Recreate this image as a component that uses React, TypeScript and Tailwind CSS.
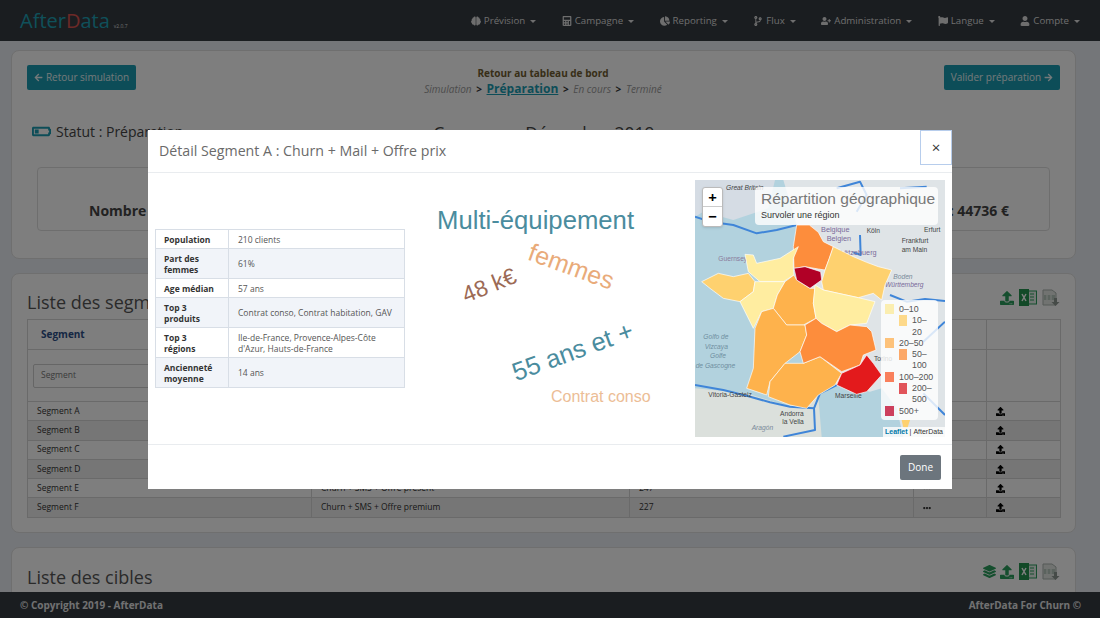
import { FaArrowLeft, FaArrowRight, FaBrain, FaCalculator, FaChartPie, FaCodeBranch, FaUserPlus, FaFlag, FaUser, FaUpload, FaLayerGroup, FaEllipsisH, FaBatteryQuarter } from 'react-icons/fa';

const navItems = [
  { label: 'Prévision', icon: FaBrain },
  { label: 'Campagne', icon: FaCalculator },
  { label: 'Reporting', icon: FaChartPie },
  { label: 'Flux', icon: FaCodeBranch },
  { label: 'Administration', icon: FaUserPlus },
  { label: 'Langue', icon: FaFlag },
  { label: 'Compte', icon: FaUser },
];

const segments = [
  { nom: 'Segment A', detail: 'Churn + Mail + Offre prix', nb: 210 },
  { nom: 'Segment B', detail: 'Churn + Mail + Offre présent', nb: 232 },
  { nom: 'Segment C', detail: 'Churn + Mail + Offre premium', nb: 241 },
  { nom: 'Segment D', detail: 'Churn + SMS + Offre prix', nb: 219 },
  { nom: 'Segment E', detail: 'Churn + SMS + Offre présent', nb: 247 },
  { nom: 'Segment F', detail: 'Churn + SMS + Offre premium', nb: 227 },
];

const details = [
  { label: 'Population', value: '210 clients', rowH: 'h-[19px]' },
  { label: 'Part des femmes', value: '61%', rowH: 'h-[30px]' },
  { label: 'Age médian', value: '57 ans', rowH: 'h-[19px]' },
  { label: 'Top 3 produits', value: 'Contrat conso, Contrat habitation, GAV', rowH: 'h-[30px]' },
  { label: 'Top 3 régions', value: "Ile-de-France, Provence-Alpes-Côte d'Azur, Hauts-de-France", rowH: 'h-[30px]' },
  { label: 'Ancienneté moyenne', value: '14 ans', rowH: 'h-[30px]' },
];

// points are in the coordinates of the svg viewBox of the map
const regions = [
  { fill: '#fd8d3c', points: '320,150 358,150 385,172 400,200 430,215 418,250 405,285 385,282 345,275 312,280 310,215' },
  { fill: '#fed16f', points: '430,215 490,245 530,262 565,275 605,285 585,330 575,375 550,355 505,368 445,355 400,345 395,320 405,285 418,250' },
  { fill: '#ffeda0', points: '165,238 190,240 200,265 270,250 325,215 310,250 310,280 312,300 280,320 210,320 175,290' },
  { fill: '#fed16f', points: '35,320 85,295 130,305 175,295 195,320 190,350 150,380 100,370 60,340' },
  { fill: '#ffeda0', points: '195,320 285,320 262,360 250,400 215,410 190,460 150,380 190,350' },
  { fill: '#feb24c', points: '312,300 320,315 360,340 375,340 370,385 378,430 340,450 290,450 250,400 262,360 285,320' },
  { fill: '#ffeda0', points: '375,330 400,345 445,355 505,368 555,380 530,445 480,450 440,470 395,445 378,430 370,385' },
  { fill: '#feb24c', points: '215,410 250,400 290,450 345,450 350,480 330,530 285,565 240,620 230,660 170,640 190,580 195,460' },
  { fill: '#feb24c', points: '285,565 340,565 390,545 455,595 435,630 385,660 350,700 300,690 235,665 240,620' },
  { fill: '#fd8d3c', points: '345,450 378,430 395,445 440,470 480,450 530,455 545,470 558,525 520,540 510,570 455,590 390,545 340,565 330,530 350,480' },
  { fill: '#e31a1c', points: '455,595 510,570 530,540 550,565 575,600 530,650 500,658 440,630' },
  { fill: '#b10026', points: '312,280 345,275 392,290 395,315 360,340 320,315' },
];

const mapLabels = [
  { x: 108, y: 45, text: 'Great Britain', fill: '#444', size: 20, italic: true },
  { x: 85, y: 257, text: 'Guernsey', fill: '#8a7a9a', size: 20 },
  { x: 393, y: 170, text: 'Belgique', fill: '#7a6a9a', size: 22 },
  { x: 410, y: 198, text: 'Belgien', fill: '#7a6a9a', size: 22 },
  { x: 530, y: 175, text: 'Köln', fill: '#444', size: 20 },
  { x: 702, y: 170, text: 'Erfurt', fill: '#444', size: 20 },
  { x: 635, y: 203, text: 'Frankfurt', fill: '#444', size: 20 },
  { x: 635, y: 230, text: 'am Main', fill: '#444', size: 20 },
  { x: 450, y: 240, text: 'Lëtzebuerg', fill: '#7a6a9a', size: 22 },
  { x: 610, y: 312, text: 'Boden', fill: '#7a8a9a', size: 20, italic: true },
  { x: 585, y: 337, text: 'Württemberg', fill: '#7a6a9a', size: 20, italic: true },
  { x: 40, y: 493, text: 'Golfo de', fill: '#6f8fa0', size: 20, italic: true },
  { x: 44, y: 522, text: 'Vizcaya', fill: '#6f8fa0', size: 20, italic: true },
  { x: 60, y: 550, text: 'Golfe', fill: '#6f8fa0', size: 20, italic: true },
  { x: 17, y: 578, text: 'de Gascogne', fill: '#6f8fa0', size: 20, italic: true },
  { x: 55, y: 667, text: 'Vitoria-Gasteiz', fill: '#444', size: 20 },
  { x: 435, y: 668, text: 'Marseille', fill: '#444', size: 20 },
  { x: 270, y: 722, text: 'Andorra', fill: '#444', size: 20 },
  { x: 277, y: 748, text: 'la Vella', fill: '#444', size: 20 },
  { x: 185, y: 765, text: 'Aragón', fill: '#7a8a9a', size: 20, italic: true },
  { x: 552, y: 558, text: 'Torino', fill: '#444', size: 20 },
];

const mapRoads = [
  'M15,125 L60,140 L130,150 L200,175 L260,165 L320,150',
  'M15,630 L100,645 L170,662 L240,682 L300,695 L372,700 L375,765 L280,785',
  'M440,630 L390,655 L372,700',
  'M510,180 L512,240 L490,232',
  'M600,360 L650,380 L705,372 L765,378',
  'M630,40 L710,35 M820,15 L808,60 L800,90',
  'M440,40 L510,20 L530,60 L500,110',
  'M700,500 L765,440',
  'M700,655 L765,720',
];

const legend = [
  { color: 'bg-[#fbeeb0]', label: '0–10', wrap: false },
  { color: 'bg-[#fdd98a]', label: '10–20', wrap: true },
  { color: 'bg-[#fdc27a]', label: '20–50', wrap: false },
  { color: 'bg-[#fca868]', label: '50–100', wrap: true },
  { color: 'bg-[#f9805c]', label: '100–200', wrap: false },
  { color: 'bg-[#e1545a]', label: '200–500', wrap: true },
  { color: 'bg-[#cc3f5c]', label: '500+', wrap: false },
];

function ExcelIcon() {
  return (
    <svg viewBox="0 0 18 17" className="h-[17px] w-[18px]">
      <rect x="7" y="2" width="10.5" height="13" fill="#e4efe8" stroke="#2a9d5c" />
      <path d="M11 5h4M11 8h4M11 11h4" stroke="#2a9d5c" strokeWidth="1.2" />
      <rect x="0" y="0" width="10" height="17" fill="#25924f" />
      <path d="M3 5l4 7M7 5l-4 7" stroke="#fff" strokeWidth="1.5" />
    </svg>
  );
}

function CsvIcon() {
  return (
    <svg viewBox="0 0 18 17" className="h-[17px] w-[18px]">
      <path d="M1 1h9l4 3v12H1z" fill="#e2e7e3" stroke="#aab3ad" />
      <rect x="2" y="6" width="11" height="5" fill="#b7c6bc" />
      <path d="M5 6v5M9 6v5" stroke="#eef2ef" />
      <path d="M12 9h3v4h2.5l-4 4-4-4H12z" fill="#8d9691" />
    </svg>
  );
}

function ExportIcons({ stack }: { stack?: boolean }) {
  return (
    <div className="flex items-center gap-[5px] text-[#2a9d5c]">
      {stack && <FaLayerGroup className="-mr-[1px] text-[13px]" />}
      <FaUpload className="text-[14px]" />
      <ExcelIcon />
      <CsvIcon />
    </div>
  );
}

function MapPanel() {
  return (
    <div className="relative h-[257px] w-[250px] shrink-0 overflow-hidden bg-[#b2d2de]">
      <svg viewBox="15 15 750 771" className="block h-full w-full font-['Liberation_Sans',sans-serif]">
        <polygon fill="#d5dce4" points="95,15 255,15 235,100 130,135 40,110 15,125 15,15" />
        <polygon fill="#dfe4e7" points="320,150 280,15 765,15 765,786 640,786 620,700 575,640 540,650 440,630 350,450" />
        <polygon fill="#dbe0dc" points="15,640 170,655 300,695 385,665 395,786 15,786" />
        {mapRoads.map((d) => (
          <path key={d} d={d} fill="none" stroke="#3f85d8" strokeWidth="6" strokeLinejoin="round" />
        ))}
        {mapLabels.map((l) => (
          <text key={l.text} x={l.x} y={l.y} fontSize={l.size} fill={l.fill} fontStyle={l.italic ? 'italic' : 'normal'}>
            {l.text}
          </text>
        ))}
        {regions.map((r) => (
          <polygon key={r.points} points={r.points} fill={r.fill} stroke="#fff" strokeWidth="2" strokeLinejoin="round" />
        ))}
        <polygon fill="#fed16f" points="635,735 660,735 652,760 640,758" />
      </svg>

      <div className="absolute left-[7px] top-[7px] flex w-[21px] flex-col rounded-[3px] border border-[#bbb] bg-white text-black shadow-sm">
        <div className="flex h-[19px] items-center justify-center border-b border-[#ccc] text-[15px] font-bold leading-none">+</div>
        <div className="flex h-[19px] items-center justify-center text-[15px] font-bold leading-none">−</div>
      </div>

      <div className="absolute left-[60px] top-[7px] h-[38px] w-[183px] rounded-[4px] bg-white/80 px-[6px] pt-[3px] font-['Liberation_Sans',sans-serif]">
        <div className="whitespace-nowrap text-[15.5px] leading-[18px] text-[#777]">Répartition géographique</div>
        <div className="text-[9px] leading-[14px] text-[#333]">Survoler une région</div>
      </div>

      <div className="absolute left-[186px] top-[120px] h-[120px] w-[57px] rounded-[4px] bg-white/80 pl-[4px] pt-[4px] font-['Liberation_Sans',sans-serif] text-[8.8px] leading-[11.3px] text-[#555]">
        {legend.map((l) => (
          <div key={l.label} className={l.wrap ? 'flex h-[22.6px] items-start pl-[14px]' : 'flex h-[11.3px] items-start gap-[5px]'}>
            <span className={`${l.color} ${l.wrap ? 'mr-[5px] h-[11px] w-[8px]' : 'h-[10px] w-[9px]'} shrink-0`} />
            <span className={l.wrap ? 'w-[20px]' : ''}>{l.label}</span>
          </div>
        ))}
      </div>

      <div className="absolute bottom-0 right-0 flex h-[10px] items-center bg-white/80 px-[2px] font-['Liberation_Sans',sans-serif] text-[7px] text-[#333]">
        <span className="font-bold text-[#0078a8]">Leaflet</span>
        <span className="mx-[2px]">|</span>
        <span>AfterData</span>
      </div>
    </div>
  );
}

function WordCloud() {
  return (
    <div className="relative h-[257px] min-w-0 flex-1 font-['Liberation_Sans',sans-serif]">
      <span className="absolute left-[32px] top-[25px] whitespace-nowrap text-[25.7px] leading-[30px] text-[#4a8c9e]">Multi-équipement</span>
      <span className="absolute left-[122px] top-[72px] rotate-[20deg] whitespace-nowrap text-[25px] leading-[28px] text-[#e9ab7a]">femmes</span>
      <span className="absolute left-[56px] top-[92px] -rotate-[22deg] whitespace-nowrap text-[23px] leading-[26px] text-[#9c6a55]">48 k€</span>
      <span className="absolute left-[104px] top-[156px] -rotate-[20deg] whitespace-nowrap text-[25.5px] leading-[30px] text-[#4a8c9e]">55 ans et +</span>
      <span className="absolute left-[146px] top-[208px] whitespace-nowrap text-[16px] leading-[18px] text-[#ecbd96]">Contrat conso</span>
    </div>
  );
}

function DetailModal() {
  return (
    <div className="absolute left-[148px] top-[130px] flex h-[359px] w-[804px] flex-col bg-white font-['Open_Sans',sans-serif]">
      <div className="flex h-[43px] shrink-0 items-start justify-between border-b border-[#e9ecef] pl-[11px]">
        <div className="pt-[11px] text-[14.2px] leading-[20px] text-[#6a6a6a]">Détail Segment A : Churn + Mail + Offre prix</div>
        <button className="flex h-[35px] w-[32px] items-center justify-center border border-[#b7cdec] text-[15px] leading-none text-[#333]">×</button>
      </div>
      <div className="flex flex-1 items-start px-[7px] pt-[7px]">
        <table className="mt-[49px] w-[250px] shrink-0 border-collapse text-[8.5px] leading-[11px] text-[#555]">
          <tbody>
            {details.map((d, i) => (
              <tr key={d.label} className={`${d.rowH} ${i % 2 === 1 ? 'bg-[#f1f4f9]' : ''}`}>
                <td className="w-[73px] border border-[#d8dee6] pl-[8px] pr-[14px] font-bold text-[#333]">{d.label}</td>
                <td className="border border-[#d8dee6] pl-[9px] pr-[4px]">{d.value}</td>
              </tr>
            ))}
          </tbody>
        </table>
        <WordCloud />
        <MapPanel />
      </div>
      <div className="flex h-[45px] shrink-0 items-start justify-end border-t border-[#e9ecef] pr-[11px] pt-[10px]">
        <button className="h-[25px] w-[41px] rounded-[2px] bg-[#6c757d] text-[10px] text-white">Done</button>
      </div>
    </div>
  );
}

export default function App() {
  return (
    <div className="relative flex h-[618px] w-[1100px] flex-col overflow-hidden bg-[#e9edf2] font-['Open_Sans',sans-serif]">
      <header className="flex h-[41px] shrink-0 items-center justify-between bg-[#343a40] pl-[20px] pr-[20px]">
        <div className="flex items-baseline">
          <span className="text-[20px] leading-none text-[#1fa0b4]">After<span className="text-[#d9534f]">D</span>ata</span>
          <span className="ml-[4px] text-[5px] text-[#ddd]">v2.0.7</span>
        </div>
        <nav className="flex gap-[25.5px] pt-[2px] text-[9.7px] text-[#dcdcdc]">
          {navItems.map((item) => (
            <div key={item.label} className="flex items-center gap-[3px]">
              <item.icon className="text-[10px]" />
              <span>{item.label}</span>
              <span className="ml-[2px] h-0 w-0 border-x-[3px] border-t-[3px] border-x-transparent border-t-[#dcdcdc]" />
            </div>
          ))}
        </nav>
      </header>

      <main className="flex min-h-0 flex-1 flex-col gap-[14px] overflow-hidden px-[11px] pt-[9px]">
        <section className="h-[209px] w-[1065px] shrink-0 rounded-[8px] border border-[#dedede] bg-[#fcfcfc] px-[15px] pt-[14px]">
          <div className="flex items-start justify-between">
            <button className="flex h-[25px] w-[109px] items-center justify-center gap-[3px] rounded-[2px] bg-[#1b9bb0] text-[10px] text-[#e6f2f4]">
              <FaArrowLeft className="text-[9px]" /> Retour simulation
            </button>
            <div className="ml-[6px] pt-[2px] text-center text-[10px] leading-[12px]">
              <div className="font-bold text-[#705c30]">Retour au tableau de bord</div>
              <div className="mt-[4px] italic text-[#999]">
                Simulation <b className="mx-[2px] not-italic text-[#333]">&gt;</b>{' '}
                <b className="text-[12px] not-italic text-[#1b9bb0] underline">Préparation</b>{' '}
                <b className="mx-[2px] not-italic text-[#333]">&gt;</b> En cours <b className="mx-[2px] not-italic text-[#333]">&gt;</b> Terminé
              </div>
            </div>
            <button className="flex h-[25px] w-[116px] items-center justify-center gap-[3px] rounded-[2px] bg-[#1b9bb0] text-[10px] text-[#e6f2f4]">
              Valider préparation <FaArrowRight className="text-[9px]" />
            </button>
          </div>
          <div className="mt-[25px] flex items-center pl-[5px] text-[14px] leading-[20px] text-[#444]">
            <FaBatteryQuarter className="mr-[5px] text-[19px] text-[#1b9bb0]" />
            <span>Statut : Préparation</span>
            <span className="ml-[250px] mt-[3px] text-[17.5px]">Campagne Décembre 2019</span>
          </div>
          <div className="mx-[10px] mt-[24px] flex h-[64px] items-end justify-between rounded-[4px] border border-[#ddd] pb-[9px] pl-[51px] pr-[40px] text-[14px] font-bold text-[#444]">
            <span>Nombre de clients</span>
            <span>Coût : 44736 €</span>
          </div>
        </section>

        <section className="h-[260px] w-[1065px] shrink-0 rounded-[8px] border border-[#dedede] bg-[#fcfcfc] px-[15px] pt-[15px]">
          <div className="flex h-[30px] items-start justify-between">
            <h2 className="mt-[1px] text-[18px] leading-[24px] text-[#555]">Liste des segments</h2>
            <ExportIcons />
          </div>
          <table className="w-[1033px] table-fixed border-collapse text-[8.5px] text-[#333]">
            <colgroup>
              <col className="w-[284px]" />
              <col className="w-[318px]" />
              <col className="w-[284px]" />
              <col className="w-[73px]" />
              <col className="w-[74px]" />
            </colgroup>
            <thead>
              <tr className="h-[30px] text-[10px] text-[#2c4f87]">
                <th className="border border-[#d5d5d5] pl-[13px] text-left">Segment</th>
                <th className="border border-[#d5d5d5] pl-[9px] text-left">Contenu</th>
                <th className="border border-[#d5d5d5] pl-[9px] text-left">Population</th>
                <th className="border border-[#d5d5d5]" />
                <th className="border border-[#d5d5d5]" />
              </tr>
              <tr className="h-[52px]">
                <td className="border border-[#d5d5d5] px-[5px]">
                  <div className="flex h-[24px] items-center rounded-[2px] border border-[#ccc] pl-[7px] text-[#777]">Segment</div>
                </td>
                <td className="border border-[#d5d5d5]" />
                <td className="border border-[#d5d5d5]" />
                <td className="border border-[#d5d5d5]" />
                <td className="border border-[#d5d5d5]" />
              </tr>
            </thead>
            <tbody>
              {segments.map((s, i) => (
                <tr key={s.nom} className={`h-[19.3px] ${i % 2 === 1 ? 'bg-[#ececec]' : ''}`}>
                  <td className="border border-[#d5d5d5] pl-[9px]">{s.nom}</td>
                  <td className="border border-[#d5d5d5] pl-[9px]">{s.detail}</td>
                  <td className="border border-[#d5d5d5] pl-[9px]">{s.nb}</td>
                  <td className="border border-[#d5d5d5] pl-[9px]"><FaEllipsisH className="text-[8px]" /></td>
                  <td className="border border-[#d5d5d5] pl-[9px]"><FaUpload className="text-[9px] text-black" /></td>
                </tr>
              ))}
            </tbody>
          </table>
        </section>

        <section className="h-[120px] w-[1065px] shrink-0 rounded-[8px] border border-[#dedede] bg-[#fcfcfc] px-[15px] pt-[15px]">
          <div className="flex items-start justify-between">
            <h2 className="mt-[2px] text-[18px] leading-[24px] text-[#555]">Liste des cibles</h2>
            <ExportIcons stack />
          </div>
        </section>
      </main>

      <footer className="flex h-[26px] shrink-0 items-center justify-between bg-[#343a40] pl-[20px] pr-[19px] text-[10px] font-bold text-[#e2e3e4]">
        <span>© Copyright 2019 - AfterData</span>
        <span>AfterData For Churn ©</span>
      </footer>

      <div className="absolute inset-0 bg-black/50" />
      <DetailModal />
    </div>
  );
}
